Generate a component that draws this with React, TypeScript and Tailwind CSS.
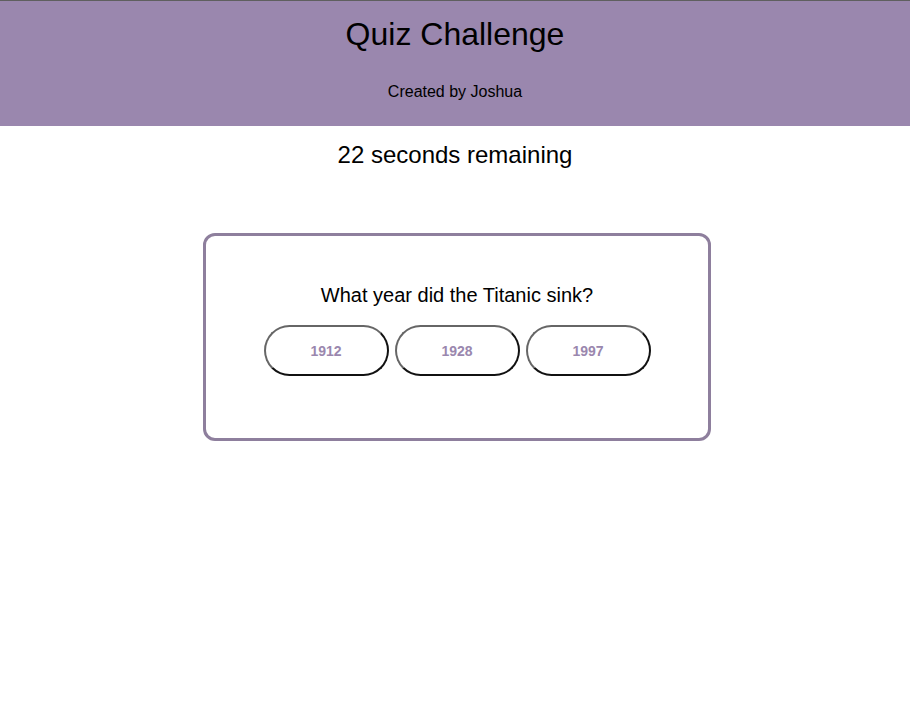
import React from 'react'

const answers = ['1912', '1928', '1997']

const App = () => {
  return (
    <div className="min-h-screen bg-white text-black font-['Liberation_Sans',Arial,sans-serif]">
      <header className="border-t border-[#5f5f5f] bg-[#9a87ae] h-[126px] flex flex-col items-center">
        <h1 className="text-[32px] leading-none mt-[17px]">Quiz Challenge</h1>
        <p className="text-base mt-[30px]">Created by Joshua</p>
      </header>

      <p className="text-2xl text-center mt-[13px]">22 seconds remaining</p>

      <div className="flex justify-center mt-[62px]">
        <div className="w-[508px] h-[208px] ml-[4px] rounded-xl border-[3px] border-[#8e7f9d] flex flex-col items-center">
          <h2 className="text-xl mt-[45px]">What year did the Titanic sink?</h2>
          <div className="flex gap-[6px] mt-[16px]">
            {answers.map((a) => (
              <button
                key={a}
                className="w-[125px] h-[51px] rounded-full border-2 [border-style:outset] border-[#666] bg-white text-[#9a87ae] font-bold text-sm"
              >
                {a}
              </button>
            ))}
          </div>
        </div>
      </div>
    </div>
  )
}

export default App
